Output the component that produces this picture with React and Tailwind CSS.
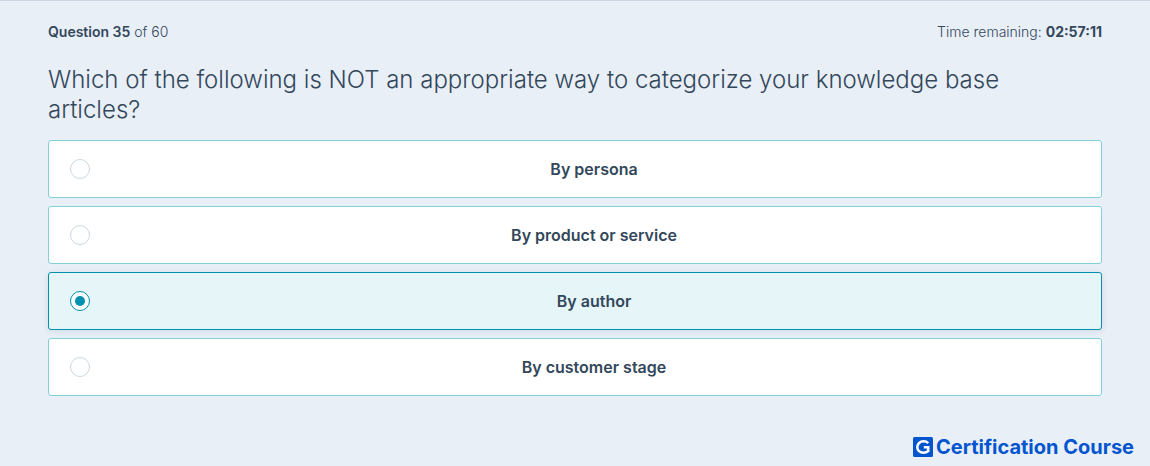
import { useState } from "react";

const ANSWERS = ["By persona", "By product or service", "By author", "By customer stage"];

function Answer({ text, checked, onSelect }) {
  return (
    <label
      className={
        "flex h-[58px] cursor-pointer items-center gap-[18px] rounded-[3px] border px-[21px] " +
        (checked
          ? "border-[#0091ae] bg-[#e5f5f8] shadow-[0_1px_6px_rgba(45,62,80,0.12)]"
          : "border-[#7fd1de] bg-white")
      }
    >
      <input
        type="radio"
        name="answer"
        value={text}
        checked={checked}
        onChange={onSelect}
        className="grid size-5 shrink-0 appearance-none place-items-center rounded-full border border-[#cbd6e2] bg-white before:size-[10px] before:rounded-full checked:border-[#0091ae] checked:before:bg-[#0091ae]"
      />
      <span className="flex-1 text-center text-base font-semibold">{text}</span>
    </label>
  );
}

function Brand() {
  return (
    <a
      href="#"
      className="flex items-center gap-[3px] text-xl leading-6 font-bold text-[#0355cf]"
    >
      <svg viewBox="0 0 20 20" className="size-5" aria-hidden="true">
        <rect width="20" height="20" rx="1.5" fill="#0355cf" />
        <path
          d="M15.2 6.2C14 4.9 12.400 4.300 10.600 4.300C7 4.300 4.300 6.700 4.300 10C4.300 13.300 7 15.700 10.500 15.700C12.300 15.700 13.900 15.200 15.200 14.100V10.300H10.800"
          fill="none"
          stroke="#fff"
          strokeWidth="2.6"
        />
      </svg>
      Certification Course
    </a>
  );
}

export default function App() {
  const [selected, setSelected] = useState("By author");

  return (
    <div className="flex min-h-screen flex-col border-t border-[#cbd6e2] bg-[#e9eff7] font-['Inter',sans-serif] text-[#33475b]">
      <main className="px-12 pt-[19px]">
        <header className="flex justify-between text-sm leading-6 font-light">
          <p>
            <strong className="font-semibold">Question 35</strong> of 60
          </p>
          <p>
            Time remaining: <strong className="font-bold">02:57:11</strong>
          </p>
        </header>
        <form>
          <fieldset>
            <legend className="pt-[21px] pr-10 pb-[15px] text-2xl leading-[30px] font-[350]">
              Which of the following is NOT an appropriate way to categorize your knowledge base
              articles?
            </legend>
            <div className="flex flex-col gap-2">
              {ANSWERS.map((text) => (
                <Answer
                  key={text}
                  text={text}
                  checked={selected === text}
                  onSelect={() => setSelected(text)}
                />
              ))}
            </div>
          </fieldset>
        </form>
      </main>
      <footer className="mt-auto flex justify-end px-4 pb-[7px]">
        <Brand />
      </footer>
    </div>
  );
}
